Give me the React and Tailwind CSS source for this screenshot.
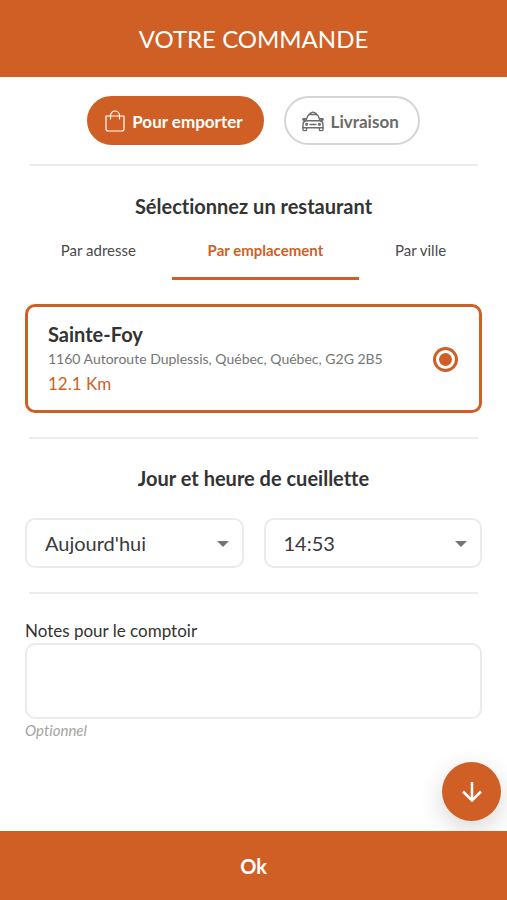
import React, { useState } from "react";

function BagIcon() {
  return (
    <svg
      viewBox="0 0 22 24"
      className="h-6 w-[22px] shrink-0"
      fill="none"
      stroke="currentColor"
      strokeWidth="1.2"
      strokeLinecap="round"
      strokeLinejoin="round"
    >
      <path d="M2 6h18v12.700a2.300 2.300 0 0 1-2.300 2.300H4.300A2.300 2.300 0 0 1 2 18.700z" />
      <path d="M6.500 9V5.500a4.500 4.500 0 0 1 9 0V9" />
    </svg>
  );
}

function TaxiIcon() {
  return (
    <svg
      viewBox="0 0 24 22"
      className="h-[22px] w-6 shrink-0"
      fill="none"
      stroke="currentColor"
      strokeWidth="1.4"
      strokeLinecap="round"
      strokeLinejoin="round"
    >
      <path d="M8.500 3.500q.3-1.400 2-1.700.5-.7 1.500-.7t1.500.7q1.700.3 2 1.700" />
      <path d="M4.800 9.800 6.900 4.800q.6-1.300 2-1.300h6.200q1.400 0 2 1.300l2.100 5" />
      <path d="M4.800 9.800h14.400q2.800.7 2.800 3.700v3.300H2v-3.300q0-3 2.800-3.700z" />
      <path d="M2 16.800v1.600q0 1.200 1.200 1.200h1.200q1.200 0 1.200-1.200v-1.600M18.400 16.800v1.600q0 1.200 1.200 1.200h1.200q1.200 0 1.200-1.200v-1.600" />
      <path d="M5.200 7.700H2.800q-1 0-1 .7t1 .8h1M18.800 7.700h2.400q1 0 1 .7t-1 .8h-1" />
      <path d="M9 13.500h6" />
      <circle cx="5.600" cy="13.300" r=".9" />
      <circle cx="18.400" cy="13.300" r=".9" />
    </svg>
  );
}

function ModeButton({ active, icon, label, onClick }) {
  return (
    <button
      type="button"
      aria-pressed={active}
      onClick={onClick}
      className={`flex h-[49px] items-center gap-1.5 rounded-full border-2 pt-0.5 pr-[19px] pl-[15px] text-[17px] font-bold ${
        active
          ? "border-[#d05f25] bg-[#d05f25] text-white"
          : "border-[#d4d4d4] bg-white text-[#6b6b6b]"
      }`}
    >
      {icon}
      {label}
    </button>
  );
}

function Divider() {
  return <hr className="mx-1 border-t-2 border-[#ececec]" />;
}

function SelectBox({ label, options }) {
  return (
    <div className="relative flex-1">
      <select
        aria-label={label}
        className="h-[50px] w-full appearance-none rounded-[10px] border-2 border-[#ebebeb] bg-white px-[18px] text-[20px] text-[#3a3a3a]"
      >
        {options.map((option) => (
          <option key={option}>{option}</option>
        ))}
      </select>
      <svg
        viewBox="0 0 12 6"
        className="pointer-events-none absolute top-[23px] right-[15px] h-1.5 w-3 text-[#757575]"
        fill="currentColor"
      >
        <path d="M0 0h12L6 6z" />
      </svg>
    </div>
  );
}

const tabs = ["Par adresse", "Par emplacement", "Par ville"];

export default function App() {
  const [mode, setMode] = useState("emporter");
  const [tab, setTab] = useState("Par emplacement");

  return (
    <div className="flex min-h-screen flex-col bg-white font-['Lato',sans-serif] text-[#333333] [font-variant-ligatures:none]">
      <header className="flex h-[77px] items-center justify-center bg-[#d05f25]">
        <h1 className="text-[24px] text-white">VOTRE COMMANDE</h1>
      </header>

      <main className="flex-1 px-[25px] pt-[19px]">
        <div className="mb-[19px] flex justify-center gap-5">
          <ModeButton
            active={mode === "emporter"}
            icon={<BagIcon />}
            label="Pour emporter"
            onClick={() => setMode("emporter")}
          />
          <ModeButton
            active={mode === "livraison"}
            icon={<TaxiIcon />}
            label="Livraison"
            onClick={() => setMode("livraison")}
          />
        </div>
        <Divider />

        <h2 className="mt-[26px] text-center text-[20px] leading-7 font-bold">
          Sélectionnez un restaurant
        </h2>
        <div role="tablist" className="mb-6 flex">
          {tabs.map((name) => (
            <button
              key={name}
              type="button"
              role="tab"
              aria-selected={tab === name}
              onClick={() => setTab(name)}
              className={`h-[60px] flex-auto border-b-3 pt-1 text-[15px] ${
                tab === name
                  ? "border-[#d05f25] font-bold text-[#d05f25]"
                  : "border-transparent text-[#4a4a4a]"
              }`}
            >
              {name}
            </button>
          ))}
        </div>

        <label className="mb-6 flex items-center justify-between rounded-[10px] border-3 border-[#d05f25] pt-[15px] pr-[21px] pb-3.5 pl-5">
          <span>
            <span className="block text-[20px] leading-6 font-bold">Sainte-Foy</span>
            <span className="block text-[14px] leading-[26px] text-[#757575]">
              1160 Autoroute Duplessis, Québec, Québec, G2G 2B5
            </span>
            <span className="block text-[17px] leading-6 text-[#d05f25]">12.1 Km</span>
          </span>
          <input
            type="radio"
            name="restaurant"
            defaultChecked
            className="h-[25px] w-[25px] shrink-0 appearance-none rounded-full border-3 border-[#d05f25] bg-clip-content p-[3px] checked:bg-[#d05f25]"
          />
        </label>
        <Divider />

        <h2 className="mt-[25px] mb-[26px] text-center text-[20px] leading-7 font-bold">
          Jour et heure de cueillette
        </h2>
        <div className="mb-6 flex gap-5">
          <SelectBox label="Jour" options={["Aujourd'hui", "Demain"]} />
          <SelectBox label="Heure" options={["14:53", "15:00", "15:15"]} />
        </div>
        <Divider />

        <label htmlFor="notes" className="mt-[25px] block text-[17px] leading-6">
          Notes pour le comptoir
        </label>
        <textarea
          id="notes"
          className="block h-[76px] w-full resize-none rounded-[10px] border-2 border-[#ebebeb] p-3 text-[17px]"
        />
        <p className="text-[15px] leading-[22px] text-[#a3a3a3] italic">Optionnel</p>
      </main>

      <button
        type="button"
        aria-label="Défiler vers le bas"
        className="fixed right-1.5 bottom-[79px] flex h-[59px] w-[59px] items-center justify-center rounded-full bg-[#d05f25] text-white shadow-[0_8px_24px_rgba(0,0,0,0.16)]"
      >
        <svg
          viewBox="0 0 20 20"
          className="h-5 w-5"
          fill="none"
          stroke="currentColor"
          strokeWidth="2.5"
        >
          <path d="M10 0v18M1 9.500l9 9 9-9" />
        </svg>
      </button>

      <button
        type="button"
        className="sticky bottom-0 z-10 h-[69px] w-full bg-[#d05f25] text-[20px] font-bold text-white"
      >
        Ok
      </button>
    </div>
  );
}
